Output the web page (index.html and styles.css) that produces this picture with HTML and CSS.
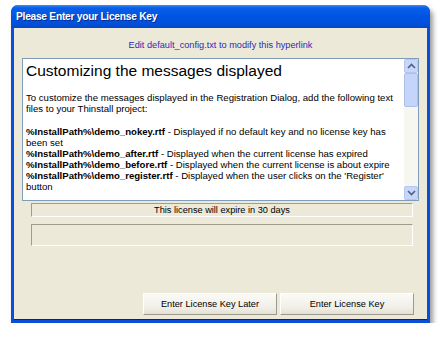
FILE: index.html
```html
<!DOCTYPE html>
<html lang="en">
<head>
    <meta charset="UTF-8">
    <meta name="viewport" content="width=device-width, initial-scale=1.0">
    <title>Please Enter your License Key</title>
    <link rel="stylesheet" href="styles.css">
</head>
<body>
    <div class="window">
        <div class="title-bar">Please Enter your License Key</div>
        <div class="window-body">
            <a class="config-link" href="#">Edit default_config.txt to modify this hyperlink</a>

            <div class="message-box">
                <div class="message-text">
                    <h1>Customizing the messages displayed</h1>
                    <p>To customize the messages displayed in the Registration Dialog, add the following text<br>
                        files to your Thinstall project:</p>
                    <p>
                        <b>%InstallPath%\demo_nokey.rtf</b> - Displayed if no default key and no license key has<br>
                        been set<br>
                        <b>%InstallPath%\demo_after.rtf</b> - Displayed when the current license has expired<br>
                        <b>%InstallPath%\demo_before.rtf</b> - Displayed when the current license is about expire<br>
                        <b>%InstallPath%\demo_register.rtf</b> - Displayed when the user clicks on the 'Register'<br>
                        button
                    </p>
                </div>
                <div class="scrollbar">
                    <div class="scroll-btn">
                        <svg width="9" height="6" viewBox="0 0 9 6"><path d="M1 5 L4.5 1.5 L8 5" fill="none" stroke="#4d6185" stroke-width="1.6"/></svg>
                    </div>
                    <div class="scroll-thumb"></div>
                    <div class="scroll-track"></div>
                    <div class="scroll-btn">
                        <svg width="9" height="6" viewBox="0 0 9 6"><path d="M1 1 L4.5 4.5 L8 1" fill="none" stroke="#4d6185" stroke-width="1.6"/></svg>
                    </div>
                </div>
            </div>

            <div class="status-box">This license will expire in 30 days</div>
            <div class="empty-box"></div>

            <div class="buttons">
                <button type="button">Enter License Key Later</button>
                <button type="button">Enter License Key</button>
            </div>
        </div>
    </div>
</body>
</html>
```

FILE: styles.css
```css
body {
    margin: 0;
    background-color: #fff;
    font-family: "Liberation Sans", Arial, sans-serif;
}

.window {
    margin: 5px 0 0 11px;
    width: 419px;
    height: 318px;
    display: flex;
    flex-direction: column;
    border-radius: 7px 7px 0 0;
    box-shadow: 3px 4px 5px rgba(0, 0, 0, 0.4);
    background: #0a4fd6;
}

.title-bar {
    height: 23px;
    line-height: 24px;
    padding-left: 5px;
    color: #fff;
    font-family: "Liberation Sans", Tahoma, sans-serif;
    font-weight: bold;
    font-size: 10.2px;
    letter-spacing: -0.25px;
    text-shadow: 1px 1px 0 #0b2b8a;
    border-radius: 7px 7px 0 0;
    background: linear-gradient(to bottom, #3d8cf6 0%, #0a5fe8 12%, #0054e3 50%, #0050dc 80%, #0846c4 100%);
}

.window-body {
    flex: 1;
    margin: 0 3px 3px 3px;
    background-color: #ece9d8;
    display: flex;
    flex-direction: column;
    border-bottom: 1px solid #001f9c;
}

.config-link {
    display: block;
    text-align: center;
    color: #2d2ab8;
    text-decoration: none;
    font-size: 9.2px;
    margin-top: 12px;
    height: 18px;
}

.message-box {
    margin-left: 8px;
    width: 395px;
    height: 141px;
    border: 1px solid #7f9db9;
    background: #fff;
    display: flex;
}

.message-text {
    flex: 1;
    padding: 2px 3px;
    overflow: hidden;
    white-space: nowrap;
    font-size: 9.6px;
    line-height: 11px;
    color: #000;
}

.message-text h1 {
    font-size: 15.5px;
    font-weight: normal;
    margin: 0 0 11px 0;
    line-height: 20px;
}

.message-text p {
    margin: 0 0 12px 0;
}

.scrollbar {
    width: 14px;
    background: #f7f7f2;
    display: flex;
    flex-direction: column;
}

.scroll-btn {
    height: 14px;
    background: #c8d6fa;
    border: 1px solid #b4c6f2;
    border-radius: 2px;
    box-sizing: border-box;
    display: flex;
    align-items: center;
    justify-content: center;
}

.scroll-thumb {
    height: 34px;
    background: #c4d4fb;
    border: 1px solid #aebfe8;
    border-radius: 2px;
    box-sizing: border-box;
}

.scroll-track {
    flex: 1;
}

.status-box,
.empty-box {
    margin: 2px 0 0 17px;
    width: 380px;
    border-top: 1px solid #a09d8f;
    border-left: 1px solid #a09d8f;
    border-right: 1px solid #fff;
    border-bottom: 1px solid #fff;
    font-size: 9.2px;
    text-align: center;
    color: #000;
}

.status-box {
    height: 12px;
    line-height: 12px;
}

.empty-box {
    margin-top: 7px;
    height: 20px;
}

.buttons {
    margin-top: auto;
    margin-bottom: 4px;
    display: flex;
    justify-content: flex-end;
    gap: 3px;
    padding-right: 13px;
}

.buttons button {
    width: 134px;
    height: 22px;
    font-family: "Liberation Sans", Arial, sans-serif;
    font-size: 9.2px;
    color: #000;
    background: linear-gradient(to bottom, #fbfaf6 0%, #f0eee6 70%, #e3e0d4 100%);
    border: 1px solid #fff;
    border-right-color: #9d9a8c;
    border-bottom-color: #9d9a8c;
    padding: 0;
}
```
